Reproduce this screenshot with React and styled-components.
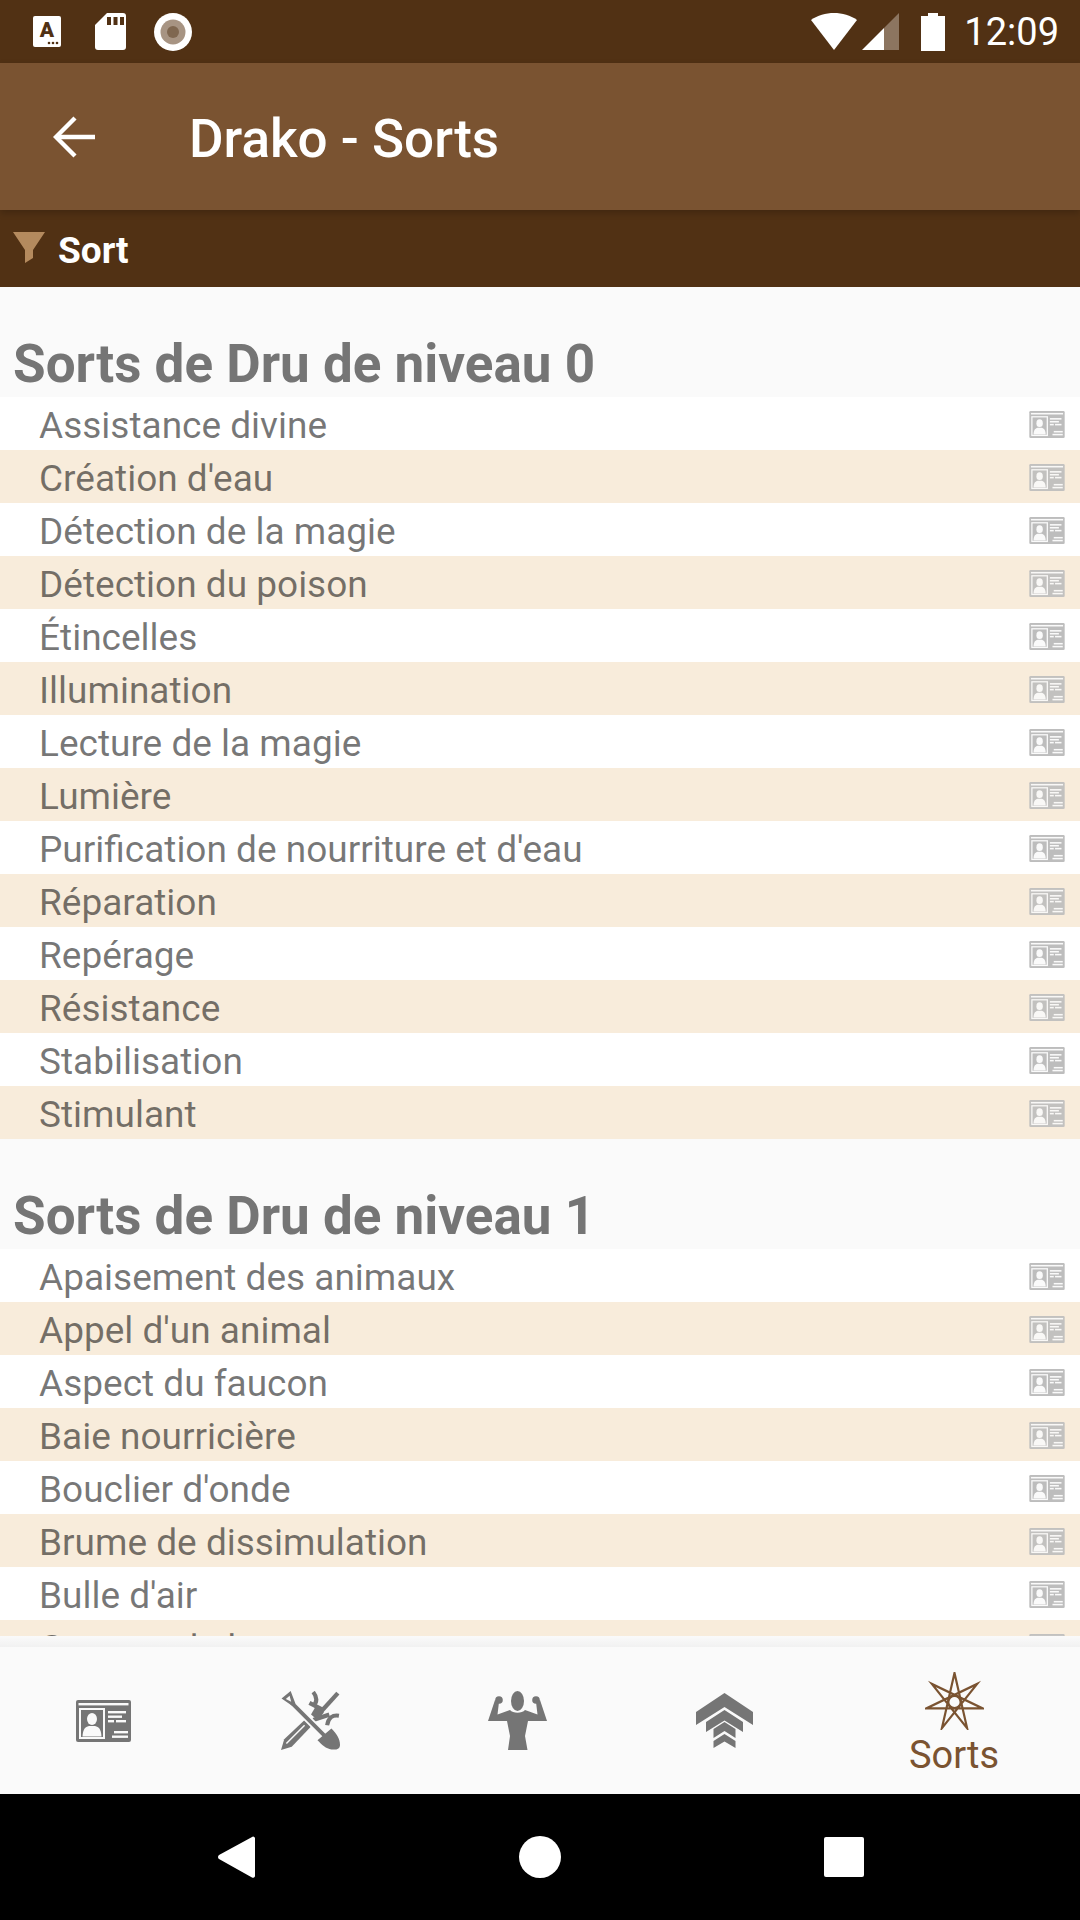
import React from 'react'
import styled, { createGlobalStyle } from 'styled-components'

const GlobalStyle = createGlobalStyle`
  html, body { margin: 0; padding: 0; background: #fafafa; }
  #root { height: 1920px; }
  * { box-sizing: border-box; }
`

const levelZero = [
  'Assistance divine', "Création d'eau", 'Détection de la magie', 'Détection du poison',
  'Étincelles', 'Illumination', 'Lecture de la magie', 'Lumière',
  "Purification de nourriture et d'eau", 'Réparation', 'Repérage', 'Résistance',
  'Stabilisation', 'Stimulant',
]
const levelOne = [
  'Apaisement des animaux', "Appel d'un animal", 'Aspect du faucon', 'Baie nourricière',
  "Bouclier d'onde", 'Brume de dissimulation', "Bulle d'air", 'Capture de la',
]

function heptagram() {
  const pts = []
  for (let i = 0; i < 7; i++) {
    const a = -Math.PI / 2 + (i * 3 * 2 * Math.PI) / 7
    pts.push(`${(29.5 + 29 * Math.cos(a)).toFixed(2)},${(30 + 29 * Math.sin(a)).toFixed(2)}`)
  }
  return pts.join(' ')
}

function CardIcon({ width, height, fill }) {
  return (
    <svg width={width} height={height} viewBox="0 0 55 42">
      <rect width="55" height="42" rx="2" fill={fill} />
      <rect x="2.5" y="3" width="50" height="2.4" fill="#fafafa" />
      <rect x="3" y="8" width="26" height="31" fill="#fafafa" />
      <rect x="5" y="10" width="22" height="27" fill={fill} />
      <ellipse cx="16" cy="19" rx="5" ry="6" fill="#fafafa" />
      <path d="M6.5 36.5 C7 29 9 27 13 26 L19 26 C23 27 25 29 25.5 36.5 Z" fill="#fafafa" />
      <rect x="32" y="11" width="18" height="2.4" fill="#fafafa" />
      <rect x="32" y="15.5" width="14" height="2.4" fill="#fafafa" />
      <rect x="32" y="20" width="6" height="2.4" fill="#fafafa" />
      <rect x="40" y="20" width="10" height="2.4" fill="#fafafa" />
      <rect x="38" y="31" width="14" height="2.4" fill="#fafafa" />
      <rect x="36" y="35.5" width="16" height="2.4" fill="#fafafa" />
    </svg>
  )
}

function ToolsIcon() {
  return (
    <svg width="59" height="59" viewBox="3 2 55 55" fill="#757575">
      <path d="M3 57 L6 47 L25 29 L31 35 L13 54 Z" />
      <path d="M8 51 L25 34" stroke="#fafafa" strokeWidth="1.4" fill="none" />
      <path d="M36 26 L56 4" stroke="#757575" strokeWidth="4" fill="none" />
      <path d="M29.5 13 L43 20 M33 29 L48 24" stroke="#757575" strokeWidth="4" fill="none" />
      <path d="M33 3 C37 8 37 12 33 16 M57 25 C51 24 47 27 46 34" stroke="#757575" strokeWidth="3.8" fill="none" />
      <path d="M35 17 L43 22 L37 29 L31 24 Z" />
      <path d="M13 13 L44 44" stroke="#fafafa" strokeWidth="7" fill="none" />
      <path d="M13 13 L44 44" stroke="#757575" strokeWidth="3.6" fill="none" />
      <path d="M3.5 9 L12 2 L16.5 14 L13 15.5 Z M7.5 9.5 L12.5 12 L11 6.5 Z" fillRule="evenodd" />
      <path d="M50 37 C55 42 58 47 58 52 C58 56 55 57 50 56.5 C45 56 41 52 37 48 Z" />
    </svg>
  )
}

function MuscleIcon() {
  return (
    <svg width="59" height="59" viewBox="0 0 59 59" fill="#757575">
      <ellipse cx="29.5" cy="10" rx="6.5" ry="10" />
      <circle cx="11" cy="9" r="3.8" />
      <circle cx="48" cy="9" r="3.8" />
      <path d="M0 30 L7 9 L11 11 L9.5 23.5 L22 19 C25 22.5 34 22.5 37 19 L49.5 23.5 L48 11 L52 9 L59 30 L40 30 L37 45 L39.5 59 L20 59 L22 45 L19 30 Z" />
    </svg>
  )
}

function RankIcon() {
  return (
    <svg width="57" height="55" viewBox="0 0 57 55" fill="#757575">
      <polygon points="28.5,0 57,19 57,32 28.5,14 0,32 0,19" />
      <polygon points="28.5,17 47,29 47,39 28.5,27.5 10,39 10,29" />
      <polygon points="28.5,29 39.5,36 39.5,45 28.5,38 17.5,45 17.5,36" />
      <polygon points="28.5,41 39.5,48 39.5,55 28.5,48.5 17.5,55 17.5,48" />
    </svg>
  )
}

function StarIcon() {
  return (
    <svg width="59" height="58" viewBox="0 0 59 58" fill="none" stroke="#7a5331">
      <polygon points={heptagram()} strokeWidth="2.2" strokeLinejoin="miter" strokeMiterlimit="12" />
      <circle cx="29.5" cy="30" r="6.2" strokeWidth="2.2" />
    </svg>
  )
}

function App() {
  return (
    <Screen>
      <GlobalStyle />
      <StatusBar>
        <StatusIcons>
          <svg width="28" height="31" viewBox="0 0 28 31">
            <rect width="28" height="31" rx="2" fill="#fff" />
            <text x="14" y="21" textAnchor="middle" fontFamily="Roboto, sans-serif" fontWeight="900" fontSize="21" fill="#513114">A</text>
            <circle cx="16" cy="27" r="1.3" fill="#513114" />
            <circle cx="20" cy="27" r="1.3" fill="#513114" />
            <circle cx="24" cy="27" r="1.3" fill="#513114" />
          </svg>
          <svg width="31" height="37" viewBox="0 0 31 37">
            <path d="M12 0 H28 A3 3 0 0 1 31 3 V34 A3 3 0 0 1 28 37 H3 A3 3 0 0 1 0 34 V12 Z" fill="#fff" />
            <rect x="12" y="4" width="4" height="8" fill="#513114" />
            <rect x="18.5" y="4" width="4" height="8" fill="#513114" />
            <rect x="25" y="4" width="4" height="8" fill="#513114" />
          </svg>
          <svg width="38" height="38" viewBox="0 0 38 38">
            <circle cx="19" cy="19" r="19" fill="#fff" />
            <circle cx="19" cy="19" r="12.5" fill="#a79483" />
            <circle cx="19" cy="19" r="6" fill="#7f6750" />
          </svg>
        </StatusIcons>
        <StatusRight>
          <svg width="46" height="37" viewBox="0 0 46 37">
            <path d="M0 7 C13 -2.3 33 -2.3 46 7 L23 37 Z" fill="#fff" />
          </svg>
          <SignalIcon width="37" height="37" viewBox="0 0 37 37">
            <polygon points="37,0 37,37 22,37 22,15" fill="#8c7560" />
            <polygon points="22,15 22,37 0,37" fill="#fff" />
          </SignalIcon>
          <BatteryIcon width="24" height="38" viewBox="0 0 24 38">
            <path d="M7 0 H17 V3 H24 V38 H0 V3 H7 Z" fill="#fff" />
          </BatteryIcon>
          <Clock>12:09</Clock>
        </StatusRight>
      </StatusBar>
      <Toolbar>
        <BackButton>
          <svg width="42" height="42" viewBox="0 0 42 42" fill="none" stroke="#fff" strokeWidth="4.4">
            <path d="M42 21 H3" />
            <path d="M22 2 L3 21 L22 40" />
          </svg>
        </BackButton>
        <Title>Drako - Sorts</Title>
      </Toolbar>
      <FilterBar>
        <svg width="32" height="31" viewBox="0 0 32 31">
          <polygon points="0,0 32,0 20,18 20,26 12,31 12,18" fill="#b48a5e" />
        </svg>
        <FilterLabel>Sort</FilterLabel>
      </FilterBar>
      <ListArea>
        <SectionTitle>Sorts de Dru de niveau 0</SectionTitle>
        {levelZero.map((name, i) => (
          <SpellRow key={name} $alt={i % 2 === 1}>
            <SpellName>{name}</SpellName>
            <CardIcon width={36} height={27} fill="#bdbdbd" />
          </SpellRow>
        ))}
        <SectionTitle>Sorts de Dru de niveau 1</SectionTitle>
        {levelOne.map((name, i) => (
          <SpellRow key={name} $alt={i % 2 === 1}>
            <SpellName>{name}</SpellName>
            <CardIcon width={36} height={27} fill="#bdbdbd" />
          </SpellRow>
        ))}
      </ListArea>
      <TabShadow />
      <TabBar>
        <Tab><CardIcon width={55} height={42} fill="#757575" /></Tab>
        <Tab><ToolsIcon /></Tab>
        <Tab><MuscleIcon /></Tab>
        <Tab><RankIcon /></Tab>
        <ActiveTab>
          <StarIcon />
          <TabLabel>Sorts</TabLabel>
        </ActiveTab>
      </TabBar>
      <NavBar>
        <NavSlot>
          <svg width="37" height="42" viewBox="0 0 37 42">
            <path d="M35 0.5 A2 2 0 0 1 37 2 V40 A2 2 0 0 1 34 41.5 L1 23 A2.5 2.5 0 0 1 1 19 Z" fill="#fff" />
          </svg>
        </NavSlot>
        <NavSlot><HomeDot /></NavSlot>
        <NavSlot><RecentSquare /></NavSlot>
      </NavBar>
    </Screen>
  )
}

export default App

const Screen = styled.div`
  width: 1080px;
  height: 1920px;
  display: flex;
  flex-direction: column;
  overflow: hidden;
  background: #fafafa;
  font-family: Roboto, "Liberation Sans", sans-serif;
`
const StatusBar = styled.div`
  height: 63px;
  flex: none;
  display: flex;
  justify-content: space-between;
  align-items: center;
  padding: 0 21px 0 33px;
  background: #513114;
`
const StatusIcons = styled.div`
  display: flex;
  align-items: center;
  gap: 34px;
  svg { display: block; }
  svg:last-child { margin-left: -6px; }
`
const StatusRight = styled.div`
  display: flex;
  align-items: center;
`
const SignalIcon = styled.svg`
  margin-left: 5px;
`
const BatteryIcon = styled.svg`
  margin-left: 22px;
`
const Clock = styled.span`
  margin-left: 19px;
  color: #fff;
  font-size: 38px;
  line-height: 44px;
`
const Toolbar = styled.div`
  position: relative;
  z-index: 2;
  height: 147px;
  flex: none;
  display: flex;
  align-items: center;
  padding-left: 53px;
  background: #7a5331;
  box-shadow: 0 3px 7px rgba(0, 0, 0, 0.2);
`
const BackButton = styled.div`
  width: 136px;
  display: flex;
  svg { display: block; }
`
const Title = styled.h1`
  margin: 5px 0 0;
  color: #fff;
  font-size: 53px;
  font-weight: 500;
`
const FilterBar = styled.div`
  height: 77px;
  flex: none;
  display: flex;
  align-items: center;
  padding: 0 13px;
  background: #513114;
  svg { display: block; margin-top: -2px; }
`
const FilterLabel = styled.span`
  margin: 3px 0 0 13px;
  color: #fff;
  font-size: 37px;
  font-weight: 700;
`
const ListArea = styled.div`
  flex: 1;
  min-height: 0;
  overflow: hidden;
`
const SectionTitle = styled.h2`
  height: 110px;
  margin: 0;
  padding: 0 13px 1px;
  display: flex;
  align-items: flex-end;
  color: #757575;
  font-size: 53px;
  font-weight: 700;
  line-height: 64px;
  background: #fafafa;
`
const SpellRow = styled.div`
  height: 53px;
  display: flex;
  align-items: center;
  justify-content: space-between;
  padding: 0 15px 0 39px;
  background: ${(p) => (p.$alt ? '#f8ecdb' : '#fff')};
  svg { display: block; flex: none; margin-top: 1px; opacity: ${(p) => (p.$alt ? 0.9 : 1)}; }
`
const SpellName = styled.span`
  margin-top: 5px;
  color: rgba(0, 0, 0, 0.54);
  font-size: 37px;
  line-height: 46px;
`
const TabShadow = styled.div`
  height: 11px;
  flex: none;
  background: linear-gradient(#fafafa, #f1f1f1);
`
const TabBar = styled.div`
  height: 147px;
  flex: none;
  display: grid;
  grid-template-columns: repeat(4, 207px) 252px;
  background: #fafafa;
`
const Tab = styled.div`
  display: flex;
  align-items: center;
  justify-content: center;
  svg { display: block; }
`
const ActiveTab = styled.div`
  display: flex;
  flex-direction: column;
  align-items: center;
  padding-top: 25px;
  svg { display: block; }
`
const TabLabel = styled.span`
  margin-top: 4px;
  color: #7a5331;
  font-size: 38px;
  line-height: 42px;
`
const NavBar = styled.div`
  height: 126px;
  flex: none;
  display: grid;
  grid-template-columns: repeat(3, 1fr);
  padding: 0 84px;
  background: #000;
`
const NavSlot = styled.div`
  display: flex;
  align-items: center;
  justify-content: center;
  svg { display: block; }
`
const HomeDot = styled.div`
  width: 42px;
  height: 42px;
  border-radius: 50%;
  background: #fff;
`
const RecentSquare = styled.div`
  width: 40px;
  height: 40px;
  border-radius: 2px;
  background: #fff;
`
